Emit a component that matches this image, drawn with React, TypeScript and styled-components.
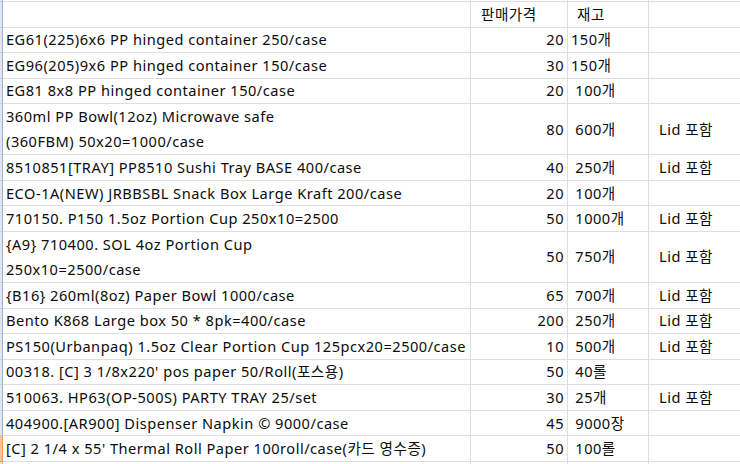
import styled, { createGlobalStyle } from "styled-components";

const GlobalStyle = createGlobalStyle`
  html, body {
    margin: 0;
    padding: 0;
    background: #fff;
    overflow: hidden;
  }
  body {
    font-family: "Noto Sans", "Noto Sans CJK KR", sans-serif;
    color: #111;
  }
`;

const UNIT = 25.55;

type Item = {
  name: string[];
  price: string;
  stock: string;
  note?: string;
};

const items: Item[] = [
  { name: ["EG61(225)6x6 PP hinged container 250/case"], price: "20", stock: "150개" },
  { name: ["EG96(205)9x6 PP hinged container 150/case"], price: "30", stock: "150개" },
  { name: ["EG81 8x8 PP hinged container 150/case"], price: "20", stock: " 100개" },
  {
    name: ["360ml PP Bowl(12oz) Microwave safe", "(360FBM) 50x20=1000/case"],
    price: "80",
    stock: " 600개",
    note: "Lid 포함",
  },
  { name: ["8510851[TRAY] PP8510 Sushi Tray BASE 400/case"], price: "40", stock: " 250개", note: "Lid 포함" },
  { name: ["ECO-1A(NEW) JRBBSBL Snack Box Large Kraft 200/case"], price: "20", stock: " 100개" },
  { name: ["710150. P150 1.5oz Portion Cup 250x10=2500"], price: "50", stock: " 1000개", note: "Lid 포함" },
  {
    name: ["{A9} 710400. SOL 4oz Portion Cup", "250x10=2500/case"],
    price: "50",
    stock: " 750개",
    note: "Lid 포함",
  },
  { name: ["{B16} 260ml(8oz) Paper Bowl 1000/case"], price: "65", stock: " 700개", note: "Lid 포함" },
  { name: ["Bento K868 Large box 50 * 8pk=400/case"], price: "200", stock: " 250개", note: "Lid 포함" },
  { name: ["PS150(Urbanpaq) 1.5oz Clear Portion Cup 125pcx20=2500/case"], price: "10", stock: " 500개", note: "Lid 포함" },
  { name: ["00318. [C] 3 1/8x220' pos paper 50/Roll(포스용)"], price: "50", stock: " 40롤" },
  { name: ["510063. HP63(OP-500S) PARTY TRAY 25/set"], price: "30", stock: " 25개", note: "Lid 포함" },
  { name: ["404900.[AR900] Dispenser Napkin © 9000/case"], price: "45", stock: " 9000장" },
  { name: ["[C] 2 1/4 x 55' Thermal Roll Paper 100roll/case(카드 영수증)"], price: "50", stock: " 100롤" },
];

const Sheet = styled.div`
  display: grid;
  grid-template-columns: 3px 468px 97px 81px 1fr;
  width: 740px;
  height: 464px;
  overflow: hidden;
  font-size: 14.6px;
  letter-spacing: 0.5px;
  color: #0c0c0c;
`;

const Row = styled.div<{ $lines: number }>`
  display: contents;
  & > * {
    height: ${(p) => p.$lines * UNIT}px;
  }
`;

const RowHead = styled.div<{ $selected?: boolean }>`
  box-sizing: border-box;
  background: ${(p) => (p.$selected ? "#f8c890" : "#dfe6f1")};
  border-right: 1px solid ${(p) => (p.$selected ? "#e8a050" : "#9fb2cc")};
  border-bottom: 1px solid ${(p) => (p.$selected ? "#e8a050" : "#c2cede")};
`;

const Cell = styled.div<{ $align?: "left" | "right"; $pad?: number }>`
  box-sizing: border-box;
  display: flex;
  flex-direction: column;
  justify-content: center;
  align-items: ${(p) => (p.$align === "right" ? "flex-end" : "flex-start")};
  padding: 0 ${(p) => (p.$align === "right" ? 3 : 0)}px 0 ${(p) => p.$pad ?? 3}px;
  border-right: 1px solid #dadfe7;
  border-bottom: 1px solid #dadfe7;
  white-space: pre;
  line-height: 25px;
  overflow: visible;
`;

const LastCell = styled(Cell)`
  border-right: none;
`;

const StubCell = styled.div<{ $last?: boolean }>`
  height: 2px;
  box-sizing: border-box;
  border-right: ${(p) => (p.$last ? "none" : "1px solid #dadfe7")};
  border-bottom: 1px solid #dadfe7;
`;

const StubHead = styled(RowHead)`
  height: 2px;
`;

export default function App() {
  return (
    <>
      <GlobalStyle />
      <Sheet>
        <StubHead />
        <StubCell />
        <StubCell />
        <StubCell />
        <StubCell $last />

        <Row $lines={1}>
          <RowHead />
          <Cell />
          <Cell $pad={10}>판매가격</Cell>
          <Cell $pad={9}>재고</Cell>
          <LastCell />
        </Row>

        {items.map((it, i) => (
          <Row key={i} $lines={it.name.length}>
            <RowHead $selected={i === items.length - 1} />
            <Cell>
              {it.name.map((l) => (
                <span key={l}>{l}</span>
              ))}
            </Cell>
            <Cell $align="right">{it.price}</Cell>
            <Cell $pad={3}>{it.stock}</Cell>
            <LastCell $pad={10}>{it.note ?? ""}</LastCell>
          </Row>
        ))}

        <Row $lines={1}>
          <RowHead />
          <Cell />
          <Cell />
          <Cell />
          <LastCell />
        </Row>
      </Sheet>
    </>
  );
}
